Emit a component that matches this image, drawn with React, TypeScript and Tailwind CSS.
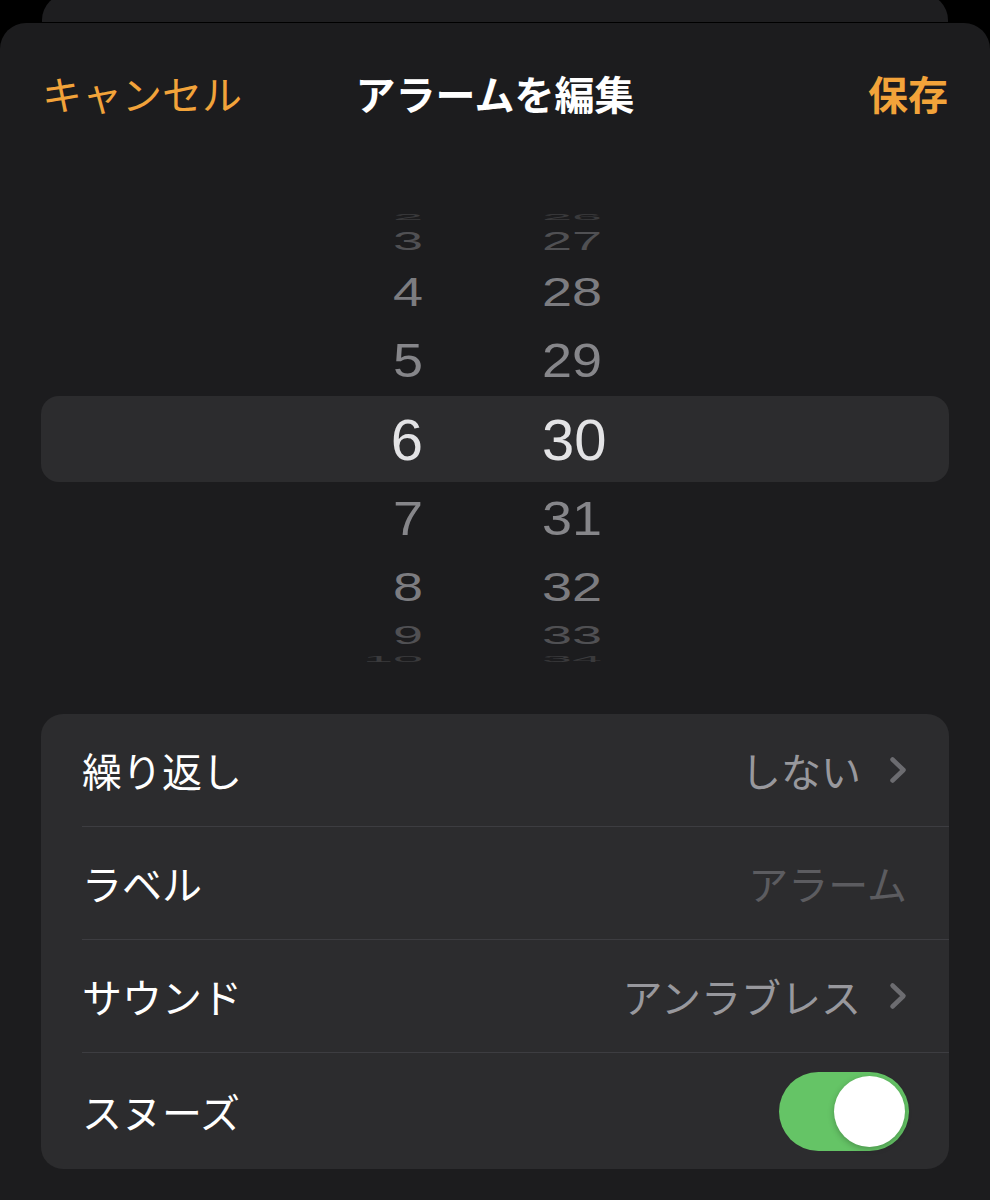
import React from 'react';

const jp = "font-['Noto_Sans_CJK_JP','Noto_Sans',sans-serif]";
const num = "font-['Liberation_Sans','Inter',sans-serif]";

type WheelRow = { h: string; m: string; height: number; scale: number; color: string; size: number };

const wheel: WheelRow[] = [
  { h: '2', m: '26', height: 24, scale: 0.16, color: '#3a3a3c', size: 54 },
  { h: '3', m: '27', height: 24, scale: 0.47, color: '#505053', size: 54 },
  { h: '4', m: '28', height: 78, scale: 0.74, color: '#7c7c80', size: 54 },
  { h: '5', m: '29', height: 58, scale: 0.9, color: '#86868a', size: 54 },
  { h: '6', m: '30', height: 102, scale: 1, color: '#e3e3e5', size: 58 },
  { h: '7', m: '31', height: 54, scale: 0.9, color: '#86868a', size: 54 },
  { h: '8', m: '32', height: 84, scale: 0.74, color: '#7c7c80', size: 54 },
  { h: '9', m: '33', height: 12, scale: 0.47, color: '#505053', size: 54 },
  { h: '10', m: '34', height: 36, scale: 0.16, color: '#3a3a3c', size: 54 },
];

const Chevron: React.FC = () => (
  <svg width="18" height="28" viewBox="0 0 18 28" className="ml-[28px] shrink-0">
    <polyline points="3.5,3.5 14.5,14 3.5,24.5" fill="none" stroke="#6c6c70" strokeWidth="4.5" strokeLinecap="round" strokeLinejoin="round" />
  </svg>
);

const Row: React.FC<{ label: string; last?: boolean; children?: React.ReactNode }> = ({ label, last, children }) => (
  <div className="pl-[41px]">
    <div className={`flex items-center justify-between pr-[42px] ${last ? 'h-[116px]' : 'h-[113px] border-b border-[#3d3d41]'}`}>
      <span className={`${jp} text-[40px] leading-none text-white`}>{label}</span>
      <div className="flex items-center">{children}</div>
    </div>
  </div>
);

const App: React.FC = () => {
  return (
    <div className="w-[990px] h-[1200px] bg-black overflow-hidden flex flex-col">
      {/* card stacked behind */}
      <div className="mx-[42px] -mt-[6px] h-[29px] shrink-0 rounded-t-[26px] bg-[#1e1e20] border-b border-black" />

      {/* sheet */}
      <div className="flex-1 rounded-t-[26px] bg-[#1c1c1e] flex flex-col">
        <header className="h-[140px] px-[42px] grid grid-cols-[1fr_auto_1fr] items-center">
          <span className={`${jp} text-[40px] leading-none text-[#f2a33a] justify-self-start`}>キャンセル</span>
          <span className={`${jp} text-[40px] leading-none font-bold text-white`}>アラームを編集</span>
          <span className={`${jp} text-[40px] leading-none font-bold text-[#f2a33a] justify-self-end`}>保存</span>
        </header>

        {/* time picker */}
        <div className="mt-[42px] grid">
          <div className="col-start-1 row-start-1 flex flex-col">
            <div className="h-[191px]" />
            <div className="mx-[41px] h-[86px] rounded-[18px] bg-[#2c2c2e]" />
          </div>
          <div className="col-start-1 row-start-1 flex flex-col">
            {wheel.map((r) => (
              <div key={r.h} className="flex items-center" style={{ height: r.height }}>
                <div className="w-[302px]" />
                <div
                  className={`${num} w-[121px] text-right leading-none`}
                  style={{ color: r.color, fontSize: r.size, transform: `scaleY(${r.scale})` }}
                >
                  {r.h}
                </div>
                <div
                  className={`${num} ml-[119px] text-left leading-none`}
                  style={{ color: r.color, fontSize: r.size, transform: `scaleY(${r.scale})` }}
                >
                  {r.m}
                </div>
              </div>
            ))}
          </div>
        </div>

        {/* settings list */}
        <div className="mt-[37px] mx-[41px] rounded-[22px] bg-[#2c2c2e] overflow-hidden">
          <Row label="繰り返し">
            <span className={`${jp} text-[40px] leading-none text-[#98989d]`}>しない</span>
            <Chevron />
          </Row>
          <Row label="ラベル">
            <span className={`${jp} text-[40px] leading-none text-[#5c5c60]`}>アラーム</span>
          </Row>
          <Row label="サウンド">
            <span className={`${jp} text-[40px] leading-none text-[#98989d]`}>アンラブレス</span>
            <Chevron />
          </Row>
          <Row label="スヌーズ" last>
            <div className="w-[130px] h-[79px] rounded-full bg-[#65c466] p-[4px] flex justify-end items-center -mr-[2px]">
              <div className="w-[71px] h-[71px] rounded-full bg-white shadow-[0_2px_6px_rgba(0,0,0,0.25)]" />
            </div>
          </Row>
        </div>
      </div>
    </div>
  );
};

export default App;
